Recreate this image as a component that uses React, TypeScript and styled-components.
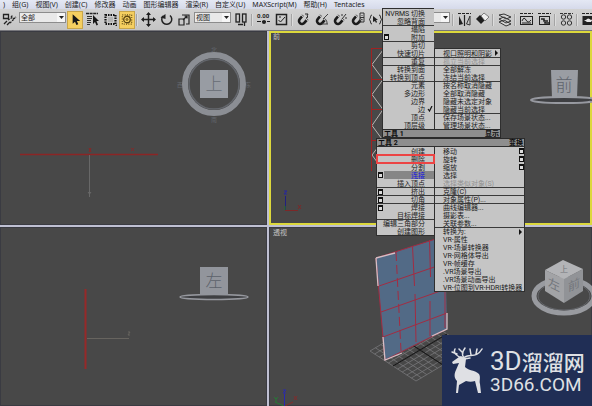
import React from "react";
import styled, { createGlobalStyle, css } from "styled-components";

const GlobalStyle = createGlobalStyle`
  * { box-sizing: border-box; }
  body {
    margin: 0;
    overflow: hidden;
    font-family: Roboto, "Noto Sans CJK SC", sans-serif;
    font-size: 7px;
    line-height: 8px;
    color: #222;
  }
  button, select { font: inherit; color: inherit; }
`;

const AppShell = styled.div`
  position: relative;
  display: flex;
  flex-direction: column;
  height: 100vh;
  background: #c9c9c9;
`;

const MenuBar = styled.nav`
  display: flex;
  gap: 7px;
  flex: none;
  height: 9px;
  padding-left: 3px;
  background: linear-gradient(#e4e8f4, #d6daea);
  font-family: "Noto Sans", "Noto Sans CJK SC", sans-serif;
`;

const MenuBarItem = styled.button`
  flex: none;
  height: 8px;
  padding: 0;
  border: 0;
  background: none;
  line-height: 7px;
  white-space: nowrap;
`;

const Toolbar = styled.div`
  display: flex;
  align-items: center;
  flex: none;
  height: 22px;
  overflow: hidden;
  background: linear-gradient(#d2d2d2, #c4c4c4);
  border-bottom: 1px solid #77777c;
`;

const ToolButton = styled.button<{ $active?: boolean }>`
  display: flex;
  align-items: center;
  justify-content: center;
  flex: none;
  width: ${(p) => (p.$active ? 16 : 18)}px;
  height: 18px;
  padding: 0;
  border: ${(p) => (p.$active ? "1px solid #c9a64a" : "0")};
  background: ${(p) => (p.$active ? "#f5cf60" : "none")};
`;

const ToolSeparator = styled.span`
  flex: none;
  width: 2px;
  height: 12px;
  margin: 0 1px;
  border-left: 1px solid #a4a4a4;
  border-right: 1px solid #dcdcdc;
`;

const SelectField = styled.label<{ $width: number }>`
  display: flex;
  flex: none;
  align-items: center;
  width: ${(p) => p.$width}px;
  height: 11px;
  margin: 0 1px 4px;
  border: 1px solid #8c8c8c;
  background: #e9e9e9;
`;

const SelectInput = styled.select`
  appearance: none;
  flex: 1;
  min-width: 0;
  height: 9px;
  padding: 0 1px;
  border: 0;
  background: none;
  line-height: 8px;
`;

const SelectArrow = styled.span`
  display: flex;
  align-items: center;
  justify-content: center;
  width: 8px;
  height: 9px;
  background: #f6f6f6;
`;

const Viewports = styled.main`
  display: grid;
  flex: 1;
  min-height: 0;
  grid-template-columns: 267fr 323fr;
  grid-template-rows: 195fr 179fr;
  gap: 2px;
  background: #bfc0d2;
`;

const Viewport = styled.section<{ $active?: boolean }>`
  position: relative;
  min-width: 0;
  min-height: 0;
  overflow: hidden;
  background: #484848;
  box-shadow: inset 0 0 0 1px #3a3b42;
  ${(p) =>
    p.$active &&
    css`
      box-shadow: inset 0 0 0 2px #dcd83c;
    `}
`;

const Scene = styled.svg`
  display: block;
  width: 100%;
  height: 100%;
`;

const ViewportLabel = styled.h2`
  position: absolute;
  top: 2px;
  left: 4px;
  margin: 0;
  font-size: 7px;
  font-weight: 400;
  color: #c4c4c4;
`;

const QuadMenu = styled.div`
  position: absolute;
  top: 9px;
  left: 376px;
  display: flex;
  flex-direction: column;
  color: #1c1c1c;
`;

const QuadPair = styled.div<{ $upper?: boolean }>`
  display: grid;
  grid-template-columns: ${(p) => (p.$upper ? "52px 67px" : "58px 91px")};
  align-items: ${(p) => (p.$upper ? "end" : "start")};
  margin-left: ${(p) => (p.$upper ? 6 : 0)}px;
`;

const QuadHeader = styled.div`
  display: flex;
  justify-content: space-between;
  grid-column: 1 / -1;
  height: 9px;
  padding: 0 1px;
  border: 1px solid #2b2b2b;
  background: #8e8e8e;
  line-height: 8px;
  font-weight: 700;
  color: #0c0c0c;
`;

const Quad = styled.div<{ $side: "left" | "right" }>`
  display: flex;
  flex-direction: column;
  background: #c5c5c5;
  border-left: 1px solid #2f2f2f;
  border-right: ${(p) => (p.$side === "right" ? "1px solid #2f2f2f" : "0")};
  box-shadow: 0 -1px #2f2f2f, 0 1px #2f2f2f;
`;

type ItemState = "selected" | "outlined" | "disabled";

const QuadItem = styled.button<{
  $side: "left" | "right";
  $divided?: boolean;
  $state?: ItemState;
}>`
  position: relative;
  display: block;
  height: 8px;
  padding-top: ${(p) => (p.$divided ? 0 : 1)}px;
  padding-right: ${(p) => (p.$side === "left" ? 9 : 0)}px;
  padding-bottom: 0;
  padding-left: ${(p) => (p.$side === "left" ? 0 : 8)}px;
  border: 0;
  border-top: ${(p) => (p.$divided ? "1px solid #3a3a3a" : "0")};
  background: none;
  line-height: 8px;
  text-align: ${(p) => (p.$side === "left" ? "right" : "left")};
  white-space: nowrap;
  ${(p) =>
    p.$state === "selected" &&
    css`
      margin-left: 7px;
      background: #868686;
      color: #1414e0;
    `}
  ${(p) =>
    p.$state === "outlined" &&
    css`
      outline: 2px solid #ec4444;
      outline-offset: -1px;
      z-index: 1;
    `}
  ${(p) =>
    p.$state === "disabled" &&
    css`
      color: #929292;
    `}
`;

const ItemMark = styled.svg<{ $at: "start" | "end" | "selected" | "check" | "arrow" }>`
  position: absolute;
  top: 1px;
  ${(p) =>
    ({
      start: "left: 1px;",
      selected: "left: -6px;",
      end: "right: 0;",
      check: "right: 1px;",
      arrow: "right: 2px;",
    })[p.$at]}
`;

const Watermark = styled.aside`
  position: absolute;
  right: 0;
  bottom: 0;
  display: flex;
  align-items: center;
  gap: 4px;
  width: 150px;
  height: 71px;
  padding-left: 9px;
  background: #202e55;
  color: #dfe0e4;
`;

const WatermarkText = styled.div`
  display: flex;
  flex-direction: column;
  white-space: nowrap;
`;

const BrandLine = styled.div`
  display: flex;
  align-items: baseline;
  font-size: 21px;
  line-height: 26px;
  font-weight: 500;
`;

const BrandPrefix = styled.span`
  font-size: 26px;
  font-weight: 400;
`;

const BrandDomain = styled.div`
  font-size: 19px;
  line-height: 18px;
`;

const menus = [
  ")", "组(G)", "视图(V)", "创建(C)", "修改器", "动画", "图形编辑器",
  "渲染(R)", "自定义(U)", "MAXScript(M)", "帮助(H)", "Tentacles",
];

const magnet = (
  <g transform="rotate(40 6 9)">
    <path d="M3 4v5a3 3 0 0 0 6 0V4" fill="none" stroke="#1b1b1b" strokeWidth="2.6" />
    <path d="M1.700 5h2.600M7.700 5h2.600" stroke="#ddd" strokeWidth="1" />
  </g>
);

const icons: Record<string, React.ReactNode> = {
  link: (
    <g fill="none" stroke="#222" strokeWidth="1.3">
      <path d="M1.500 2.500h5v4h-5zM2 12l3-3M5 13l3-3" />
      <path d="M6 8l5-3M8 11l5-5M9 5l2-2M11 7l3-2" strokeDasharray="2 1" />
    </g>
  ),
  cursor: <path d="M5 2v10l2.500-2 1.500 3.500 2-1L9.500 9H13z" fill="#171717" />,
  list: (
    <g>
      <path d="M1 1.500h12" stroke="#222" strokeWidth="1.500" strokeDasharray="3 .6" />
      <path d="M2 4.500h5M2 6.500h5M2 8.500h4M2 10.500h4M2 12.500h3" stroke="#333" />
      <path d="M8 3v9l2-2 1.500 3.500 1.500-.7L11.500 9H14z" fill="#171717" />
    </g>
  ),
  region: (
    <g>
      <rect x="2.500" y="3" width="10" height="9" fill="none" stroke="#111" strokeWidth="2.200" strokeDasharray="1.500 1" />
      <rect x="5" y="5" width="5" height="5" fill="#b4b4b4" />
      <path d="M14 14v-2l-2 2z" fill="#222" />
    </g>
  ),
  windowRegion: (
    <g fill="none" stroke="#5b4510">
      <rect x="2.500" y="2.500" width="10" height="10" strokeWidth="1.300" strokeDasharray="1 1.500" />
      <circle cx="7.500" cy="7.500" r="3.500" strokeWidth="1.400" />
      <circle cx="7.500" cy="7.500" r="1" />
    </g>
  ),
  move: (
    <g fill="#1d1d1d">
      <path d="M7.500 1v13M1 7.500h13" stroke="#1d1d1d" strokeWidth="1.500" />
      <path d="M7.500 0l2.500 3H5zM7.500 15l2.500-3H5zM0 7.500l3-2.500v5zM15 7.500l-3-2.500v5z" />
    </g>
  ),
  rotate: (
    <g>
      <path d="M4 4a5 5 0 1 0 7-.5" fill="none" stroke="#222" strokeWidth="1.500" />
      <path d="M1.500 5.500L6.500 2v5z" fill="#222" />
    </g>
  ),
  scale: (
    <g fill="none" stroke="#222" strokeWidth="1.200">
      <path d="M2 7h5v6H2zM5 3h7v9H9" />
      <path d="M6 8l4-4M7.500 4H10v2.500" />
    </g>
  ),
  pivot: (
    <g fill="none" stroke="#222" strokeWidth="1.300">
      <rect x="2" y="2" width="3.500" height="8" />
      <rect x="8.500" y="2" width="3.500" height="8" />
      <path d="M4 12.500h5M10.500 10v4" />
    </g>
  ),
  manipulate: (
    <g>
      <text x="1" y="6" fontSize="6" fontWeight="700" fill="#222">0.00</text>
      <path d="M1 9.500h13" stroke="#222" strokeDasharray="4 1" />
      <circle cx="8" cy="10" r="2" fill="#222" />
    </g>
  ),
  keyboard: (
    <g fill="none" stroke="#222" strokeWidth="1.500">
      <rect x="2.500" y="2.500" width="10" height="10" />
      <path d="M4.500 8l2 2 4.500-5M5 5h2" strokeWidth="1" />
    </g>
  ),
  magnet3: <g>{magnet}<path d="M9 2h3l-1 2 1 1-2 1" fill="none" stroke="#222" /></g>,
  magnetAngle: <g>{magnet}<path d="M14 2L9 7M8 12h6M12 8a5 5 0 0 1 1 4" fill="none" stroke="#444" /></g>,
  magnetPercent: <g>{magnet}<path d="M14 2l-4 5M10 2v2M14 5v2" fill="none" stroke="#333" /></g>,
  magnetSpinner: <g>{magnet}<path d="M10 1h4v9h-4zM10 5.500h4M12 3v1M12 7v1" fill="none" stroke="#333" /></g>,
  sets: (
    <g>
      <path d="M4 3Q2.500 3 2.500 5T1 7.500Q2.500 8 2.500 10T4 12M11 3q1.500 0 1.500 2T14 7.500Q12.500 8 12.500 10T11 12" fill="none" stroke="#333" />
      <path d="M5 4v6l2-1 1 2 1-1-1-2h2z" fill="#222" />
    </g>
  ),
  mirror: (
    <g>
      <path d="M1 1.500h13" stroke="#222" strokeDasharray="3 1" />
      <path d="M2 4v9l4-1z" fill="#222" />
      <path d="M7.500 3v11" stroke="#222" strokeWidth="1.200" />
      <path d="M13 4v9l-3.500-1z" fill="none" stroke="#333" />
    </g>
  ),
  align: (
    <g>
      <path d="M1 7l4-4 5 5-4 4z" fill="#1f1f1f" />
      <path d="M6 4l3-3 5 4-4 4z" fill="#eee" stroke="#555" strokeWidth=".7" />
    </g>
  ),
  layers: (
    <g fill="#d6d6d6" stroke="#333">
      <path d="M2 10l7 4 5-2-7-4zM2 7l7 4 5-2-7-4zM2 3l7 4 5-2-7-3z" />
    </g>
  ),
  curve: (
    <g fill="none" stroke="#222">
      <path d="M1 1.500h13" strokeDasharray="3 1" />
      <rect x="1.500" y="4.500" width="12" height="8" />
      <path d="M3 9q2-5 4-1t5 0M3 11h9" />
    </g>
  ),
  schematic: (
    <g fill="none" stroke="#222">
      <path d="M1 1.500h13" strokeDasharray="3 1" />
      <rect x="2.500" y="4.500" width="10" height="8" />
      <path d="M4 7h3v2h4M8 10v1h4" strokeWidth="1.600" />
    </g>
  ),
  material: (
    <g fill="none" stroke="#333">
      <path d="M1 1.500h13" strokeDasharray="3 1" />
      <circle cx="4.500" cy="5" r="2.200" /><circle cx="10.500" cy="5" r="2.200" />
      <circle cx="4.500" cy="11" r="2.200" /><circle cx="10.500" cy="11" r="2.200" />
    </g>
  ),
  render: (
    <g>
      <path d="M1 1.500h14" stroke="#222" strokeDasharray="3 1" />
      <rect x="1.500" y="4" width="12" height="9" fill="#222" />
      <path d="M3 8h2q2-3 5 0l2-1-2 3H6z" fill="#e5e5e5" />
    </g>
  ),
};

type Tool =
  | { kind: "button"; icon: string; label: string; active?: boolean }
  | { kind: "separator" }
  | { kind: "select"; label: string; value: string; width: number };

const tool = (icon: string, label: string, active = false): Tool => ({ kind: "button", icon, label, active });
const separator: Tool = { kind: "separator" };
const select = (label: string, value: string, width: number): Tool => ({ kind: "select", label, value, width });

const tools: Tool[] = [
  tool("link", "绑定"), select("选择过滤器", "全部", 47),
  tool("cursor", "选择对象", true), tool("list", "按名称选择"), tool("region", "矩形选择区域"),
  tool("windowRegion", "窗口/交叉", true), separator,
  tool("move", "移动"), tool("rotate", "旋转"), tool("scale", "缩放"),
  select("参考坐标系", "视图", 37), tool("pivot", "使用轴点中心"), separator,
  tool("manipulate", "选择并操纵"), tool("keyboard", "键盘快捷键覆盖"), separator,
  tool("magnet3", "捕捉开关"), tool("magnetAngle", "角度捕捉"), tool("magnetPercent", "百分比捕捉"),
  tool("magnetSpinner", "微调器捕捉"), tool("sets", "编辑命名选择集"),
  select("命名选择集", "", 65), separator,
  tool("mirror", "镜像"), tool("align", "对齐"), separator, tool("layers", "层管理器"), separator,
  tool("curve", "曲线编辑器"), tool("schematic", "图解视图"), separator,
  tool("material", "材质编辑器"), separator, tool("render", "渲染设置"),
];

interface Item {
  text: string;
  divided?: boolean;
  state?: ItemState;
  mark?: "window" | "check" | "arrow";
}

const upperLeft: Item[] = [
  { text: "NVRMS 切换" }, { text: "忽略背面" },
  { text: "塌陷", divided: true }, { text: "附加", mark: "window" },
  { text: "剪切", divided: true }, { text: "快速切片" },
  { text: "重复", divided: true },
  { text: "转换到面", divided: true }, { text: "转换到顶点" },
  { text: "元素", divided: true }, { text: "多边形" }, { text: "边界" },
  { text: "边", mark: "check" }, { text: "顶点" }, { text: "顶层级" },
];

const upperRight: Item[] = [
  { text: "视口照明和阴影", mark: "arrow" },
  { text: "孤立当前选择", divided: true, state: "disabled" },
  { text: "全部解冻", divided: true }, { text: "冻结当前选择" },
  { text: "按名称取消隐藏", divided: true }, { text: "全部取消隐藏" },
  { text: "隐藏未选定对象" }, { text: "隐藏当前选择" },
  { text: "保存场景状态...", divided: true }, { text: "管理场景状态..." },
];

const lowerLeft: Item[] = [
  { text: "创建" }, { text: "删除", state: "outlined" }, { text: "分割" },
  { text: "连接", state: "selected", mark: "window" }, { text: "插入顶点" },
  { text: "挤出", divided: true, mark: "window" },
  { text: "切角", divided: true, mark: "window" },
  { text: "焊接", divided: true, mark: "window" }, { text: "目标焊接" },
  { text: "编辑三角部分", divided: true }, { text: "创建图形" },
];

const lowerRight: Item[] = [
  { text: "移动", mark: "window" }, { text: "旋转", mark: "window" }, { text: "缩放", mark: "window" },
  { text: "选择" }, { text: "选择类似对象(S)", state: "disabled" },
  { text: "克隆(C)", divided: true }, { text: "对象属性(P)...", divided: true },
  { text: "曲线编辑器...", divided: true }, { text: "摄影表..." }, { text: "关联参数..." },
  { text: "转换为:", divided: true, mark: "arrow" },
  { text: "VR-属性" }, { text: "VR-场景转换器" }, { text: "VR-网格体导出" }, { text: "VR-帧缓存" },
  { text: ".VR场景导出" }, { text: ".VR场景动画导出" }, { text: "VR-位图到VR-HDRI转换器" },
];

function Mark({ item, side }: { item: Item; side: "left" | "right" }) {
  if (item.mark === "window") {
    const at = side === "right" ? "end" : item.state === "selected" ? "selected" : "start";
    return (
      <ItemMark $at={at} width="5" height="6" aria-hidden>
        <rect x=".5" y=".5" width="4" height="5" fill="#ddd" stroke="#111" />
        <path d="M0 1h5" stroke="#111" strokeWidth="2" />
      </ItemMark>
    );
  }
  if (item.mark === "check") {
    return (
      <ItemMark $at="check" width="6" height="6" aria-hidden>
        <path d="M1 3l1.500 2L5 0" fill="none" stroke="#111" strokeWidth="1.200" />
      </ItemMark>
    );
  }
  if (item.mark === "arrow") {
    return (
      <ItemMark $at="arrow" width="4" height="6" aria-hidden>
        <path d="M1 0l3 3-3 3z" fill="#111" />
      </ItemMark>
    );
  }
  return null;
}

function QuadList({ items, side }: { items: Item[]; side: "left" | "right" }) {
  return (
    <Quad $side={side}>
      {items.map((item) => (
        <QuadItem
          key={item.text}
          $side={side}
          $divided={item.divided}
          $state={item.state}
          disabled={item.state === "disabled"}
        >
          {item.text}
          <Mark item={item} side={side} />
        </QuadItem>
      ))}
    </Quad>
  );
}

function ToolbarEntry({ entry }: { entry: Tool }) {
  if (entry.kind === "separator") return <ToolSeparator />;
  if (entry.kind === "select") {
    return (
      <SelectField $width={entry.width}>
        <SelectInput aria-label={entry.label} defaultValue={entry.value}>
          <option value={entry.value}>{entry.value}</option>
        </SelectInput>
        <SelectArrow>
          <svg width="5" height="3" aria-hidden><path d="M0 0h5L2.500 3z" fill="#222" /></svg>
        </SelectArrow>
      </SelectField>
    );
  }
  return (
    <ToolButton $active={entry.active} aria-label={entry.label}>
      <svg width="15" height="15" viewBox="0 0 15 15" aria-hidden>{icons[entry.icon]}</svg>
    </ToolButton>
  );
}

function TopScene() {
  return (
    <Scene aria-hidden>
      <g fontSize="6" textAnchor="middle" fill="#63676e">
        <text x="214" y="21">北</text>
        <text x="180" y="56">西</text>
        <text x="248" y="56">东</text>
        <text x="214" y="91">南</text>
      </g>
      <circle cx="214" cy="53" r="29" fill="none" stroke="#8b8e94" strokeWidth="6" />
      <circle cx="214" cy="53" r="25" fill="none" stroke="#63666c" strokeWidth="1.500" />
      <rect x="200" y="39" width="28" height="28" fill="#989ca3" />
      <text x="214" y="59" fontSize="17" fontWeight="300" textAnchor="middle" fill="#676c75">上</text>
      <path d="M20 123.500h138" stroke="#8b2525" strokeWidth="1.400" />
      <path d="M89.500 124v42M88 161l1.500 2 1.500-2" stroke="#686868" fill="none" />
      <path d="M89 117l2 4M91 117l-2 4M131 117l3 3M134 117l-3 3" stroke="#8b2525" />
    </Scene>
  );
}

function FrontScene() {
  return (
    <Scene aria-hidden>
      <path d="M114 19l-11 14.500L114 48.500l-11 15 11 15-11 16 11 15-11 14.500 11 15" fill="none" stroke="#b9b3b0" />
      <path d="M102.500 17v123M102 17.500h101M102 48.500h20M102 78.500h20M102 109.500h12" fill="none" stroke="#a02222" />
      <path d="M16.500 179v-14" stroke="#202080" />
      <path d="M16 179.500h13" stroke="#7c2828" />
      <path d="M16 175v4" stroke="#247024" />
      <path d="M15 160h3l-3 3h3" fill="none" stroke="#2525a0" />
      <path d="M29 174l3 4M32 174l-3 4" stroke="#7c2828" />
      <ellipse cx="295" cy="69" rx="33" ry="3" fill="#3e3f42" stroke="#9799a0" strokeWidth="2" />
      <path d="M282 39h27l-1 28h-25z" fill="#9a9da3" />
      <text x="295" y="60" fontSize="17" fontWeight="300" textAnchor="middle" fill="#5f646d">前</text>
    </Scene>
  );
}

function LeftScene() {
  return (
    <Scene aria-hidden>
      <path d="M85.500 62v80" stroke="#962929" strokeWidth="2" />
      <path d="M87 111.500h42" stroke="#67645f" />
      <path d="M128 105h2l-2 3h2" fill="none" stroke="#67645f" />
      <ellipse cx="214" cy="70" rx="34" ry="2.500" fill="#3e3f42" stroke="#96989e" strokeWidth="1.500" />
      <rect x="200" y="40" width="28" height="28" fill="#92959c" />
      <text x="214" y="60" fontSize="17" fontWeight="300" textAnchor="middle" fill="#5d626b">左</text>
    </Scene>
  );
}

function PerspectiveScene() {
  const steps = Array.from({ length: 11 }, (_, i) => i / 10);
  return (
    <Scene aria-hidden>
      <g stroke="#77777a" strokeWidth=".8">
        {steps.map((t) => (
          <g key={t}>
            <path d={`M${101 + 46 * t} ${124 + 30 * t}l54 -32`} />
            <path d={`M${101 + 54 * t} ${124 - 32 * t}l46 30`} />
          </g>
        ))}
      </g>
      <path d="M124 139l54-32M128 108l46 30" stroke="#181818" strokeWidth="1.200" />
      <path d="M107 31l69-22 2 93-62 31z" fill="#526a86" />
      <g fill="none" stroke="#a22c42">
        <path d="M107 31l69-22v92M107 31l9 102 62-31M110 59l67-23M112 85l65-23M114 110l64-24" />
        <path d="M127 25l5 99" strokeDasharray="9 4" />
        <path d="M143.500 19l2 40M146 67l1 48M160.500 13l1 37M161 74v35" />
      </g>
      <path d="M107 31l19-5M107 31l2 28M114 110l2 23 17-7M178 86v16l-15 7" fill="none" stroke="#d5bfc5" strokeWidth="1.300" />
      <g fill="none">
        <path d="M15.500 179v-12M14 163h3l-3 3h3" stroke="#2828b0" />
        <path d="M16 179l8-4M25 169l3 4M28 169l-3 4" stroke="#862b2b" />
        <path d="M15 179l-9-4M5 170l2 2 2-2M7 172v3" stroke="#247b34" />
      </g>
      <ellipse cx="295" cy="69" rx="30" ry="17" fill="none" stroke="#999ba0" strokeWidth="5" />
      <ellipse cx="295" cy="69" rx="26" ry="14" fill="none" stroke="#64666b" />
      <path d="M276 43l19 9v24l-19-12z" fill="#a2a3a6" />
      <path d="M295 52l19-10v22l-19 12z" fill="#919397" />
      <path d="M276 43l18-10 20 9-19 10z" fill="#b3b4b7" />
      <g fontSize="12" fill="#74777d" textAnchor="middle">
        <text transform="translate(285 62) skewY(26)">左</text>
        <text transform="translate(305 62) skewY(-26)">前</text>
        <text x="295" y="45" fontSize="8">上</text>
      </g>
    </Scene>
  );
}

function Deer() {
  return (
    <svg width="35" height="48" viewBox="0 0 35 48" aria-hidden>
      <path
        d="M1 15l7-5 2-1 5 3-1 8c4 4 10 3 14 7 2 3 0 7 1 10l1 9h-3l-3-12c-3 1-6 1-9 0l-7 4-1 8H5l1-12c-3-3-3-7-1-11l3-7-6 1z"
        fill="currentColor"
      />
      <path
        d="M10 11C5 8 2 6 4 2M6 7L1 5M13 11c-3-4-1-7 1-10M12 6L8 2M14 10c5-3 12 1 17-8M20 8l-1-6M25 7l1-5M13 12l6-1"
        fill="none"
        stroke="currentColor"
        strokeWidth="1.500"
        strokeLinecap="round"
      />
    </svg>
  );
}

export default function App() {
  return (
    <AppShell>
      <GlobalStyle />
      <MenuBar>
        {menus.map((name) => <MenuBarItem key={name}>{name}</MenuBarItem>)}
      </MenuBar>
      <Toolbar role="toolbar">
        {tools.map((entry, index) => <ToolbarEntry key={index} entry={entry} />)}
      </Toolbar>
      <Viewports>
        <Viewport><TopScene /></Viewport>
        <Viewport $active><ViewportLabel>前</ViewportLabel><FrontScene /></Viewport>
        <Viewport><LeftScene /></Viewport>
        <Viewport><ViewportLabel>透视</ViewportLabel><PerspectiveScene /></Viewport>
      </Viewports>
      <QuadMenu>
        <QuadPair $upper>
          <QuadList items={upperLeft} side="left" />
          <QuadList items={upperRight} side="right" />
          <QuadHeader><span>工具 1</span><span>显示</span></QuadHeader>
        </QuadPair>
        <QuadPair>
          <QuadHeader><span>工具 2</span><span>变换</span></QuadHeader>
          <QuadList items={lowerLeft} side="left" />
          <QuadList items={lowerRight} side="right" />
        </QuadPair>
      </QuadMenu>
      <Watermark>
        <Deer />
        <WatermarkText>
          <BrandLine><BrandPrefix>3D</BrandPrefix>溜溜网</BrandLine>
          <BrandDomain>3D66.COM</BrandDomain>
        </WatermarkText>
      </Watermark>
    </AppShell>
  );
}
